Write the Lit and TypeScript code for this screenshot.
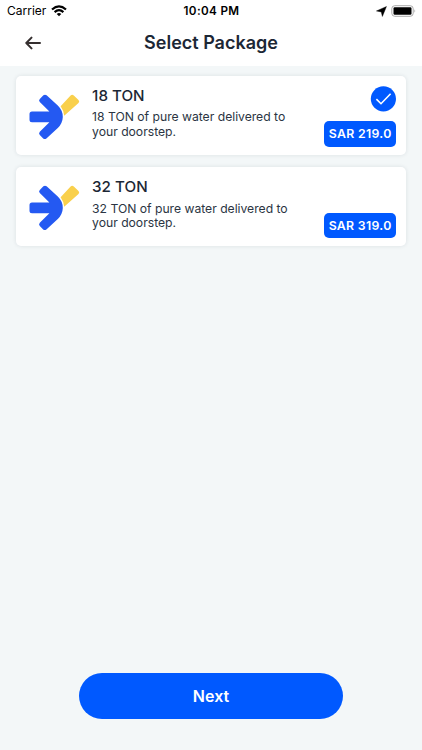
import { LitElement, html, css, svg, nothing } from "lit";
import { customElement, property, state } from "lit/decorators.js";

interface WaterPackage {
  tons: number;
  price: string;
}

const PACKAGES: WaterPackage[] = [
  { tons: 18, price: "219.0" },
  { tons: 32, price: "319.0" },
];

const logo = svg`
  <path fill="#f9d04c" d="M31.6 12.3 L41.6 1.6 Q43.2 .1 44.8 1.6 L49.5 5.9 Q51 7.4 49.5 8.9 L35.2 21.8 Q34.7 16.5 31.6 12.3Z"/>
  <path fill="#2459f2" d="M17.6 1.3 L28.8 11.6 Q33.9 16.6 33.8 23 Q33.6 29.2 28.8 34.1 L17.4 44.4 Q15.8 45.8 14.2 44.4 L10.8 41.1 Q9.3 39.4 10.8 37.8 L20.4 28.2 H3 Q.5 28.2 .5 25.7 V20.1 Q.5 17.6 3 17.6 H20.4 L10.8 8.1 Q9.3 6.5 10.8 4.9 L14.4 1.3 Q16 0 17.6 1.3Z"/>`;

@customElement("status-bar")
export class StatusBar extends LitElement {
  static styles = css`
    :host {
      display: flex;
      align-items: center;
      height: 22px;
      padding: 0 6px 0 7px;
      color: #000;
      font-size: 12px;
      line-height: 22px;
    }
    .side { flex: 1; display: flex; align-items: center; }
    .carrier { width: 39px; letter-spacing: 0; }
    .wifi { margin-left: 5px; }
    .time { font-size: 11.7px; font-weight: 600; letter-spacing: 0.35px; }
    .end { justify-content: flex-end; gap: 4.5px; }
    svg { display: block; }
  `;

  render() {
    return html`
      <div class="side">
        <span class="carrier">Carrier</span>
        <svg class="wifi" width="16" height="12" viewBox="0 0 16 12">
          <g fill="none" stroke="#000" stroke-width="2.2">
            <path d="M1 4.5 Q8 -1.7 15 4.5" />
            <path d="M3.6 7.1 Q8 3.2 12.4 7.1" />
          </g>
          <path d="M5.7 9 Q8 7 10.3 9 L8 11.3Z" />
        </svg>
      </div>
      <span class="time">10:04 PM</span>
      <div class="side end">
        <svg width="11" height="11" viewBox="0 0 10 10"><path d="M9.5 .5 L5.8 9.5 L4.8 5.4 L.4 4.5Z" stroke="#000" stroke-width=".4" /></svg>
        <svg width="25" height="12" viewBox="0 0 25 12">
          <rect x=".8" y=".7" width="21.4" height="10.6" rx="3" fill="#fff" stroke="#aaa" />
          <rect x="2.5" y="2.2" width="18" height="7.6" rx="1.2" />
          <path d="M23.5 4.2 Q25 6 23.5 7.8Z" fill="#999" />
        </svg>
      </div>
    `;
  }
}

@customElement("package-card")
export class PackageCard extends LitElement {
  @property({ attribute: false }) item!: WaterPackage;
  @property({ type: Boolean }) selected = false;

  static styles = css`
    :host {
      display: flex;
      box-sizing: border-box;
      height: 79px;
      padding: 0 10px 0 13px;
      border-radius: 5px;
      background: #fff;
      box-shadow: 0 0 4px rgba(30, 45, 60, 0.11);
      color: #1c2735;
      cursor: pointer;
    }
    .logo { flex: none; margin: 18px 12.5px 0 0; }
    .info { flex: 1; padding-top: 10px; }
    .name { font-size: 15.2px; line-height: 19px; font-weight: 450; letter-spacing: 0; }
    .text { margin-top: 5.7px; width: 200px; font-size: 12.2px; line-height: 14.3px; letter-spacing: -0.02px; color: #2b3543; white-space: nowrap; }
    .aside { display: flex; flex-direction: column; align-items: flex-end; justify-content: space-between; padding: 9.8px 0 8px; box-sizing: border-box; }
    .price {
      margin-top: auto;
      width: 72.5px;
      height: 25.5px;
      border-radius: 5px;
      background: #0059ff;
      color: #fff;
      font-size: 12.3px;
      font-weight: 600;
      line-height: 25.5px;
      letter-spacing: 0.32px;
      text-align: center;
    }
    svg { display: block; }
  `;

  render() {
    const { tons, price } = this.item;
    return html`
      <svg class="logo" width="51" height="46" viewBox="0 0 51 46">${logo}</svg>
      <div class="info">
        <div class="name">${tons} TON</div>
        <div class="text">${tons} TON of pure water delivered to<br />your doorstep.</div>
      </div>
      <div class="aside">
        ${this.selected
          ? html`<svg width="26" height="26" viewBox="0 0 26 26">
              <circle cx="13.4" cy="12.8" r="12.6" fill="#0059ff" />
              <path d="M6.4 13.1 L11 17.7 L20.6 7.8" fill="none" stroke="#fff" stroke-width="1.6" />
            </svg>`
          : nothing}
        <div class="price">SAR ${price}</div>
      </div>
    `;
  }
}

@customElement("app-root")
export class AppRoot extends LitElement {
  @state() private selected = 0;

  static styles = css`
    :host {
      display: flex;
      flex-direction: column;
      box-sizing: border-box;
      height: 100vh;
      background: #f3f7f8;
      font-family: Inter, "Liberation Sans", sans-serif;
    }
    .top { height: 66px; background: #fff; }
    .header { display: grid; grid-template-columns: 66px 1fr 66px; align-items: center; height: 42px; }
    .back { display: block; margin-left: 25px; }
    h1 { margin: 0; text-align: center; font-size: 18px; line-height: 24px; font-weight: 600; color: #1c2735; }
    .list { flex: 1; display: flex; flex-direction: column; gap: 12.3px; padding: 9.8px 15.6px 0; }
    .next {
      align-self: center;
      width: 264px;
      height: 46px;
      margin-bottom: 31px;
      padding: 0;
      border: 0;
      border-radius: 23px;
      background: #0059ff;
      color: #fff;
      font: 600 16px/46px Inter, "Liberation Sans", sans-serif;
    }
  `;

  render() {
    return html`
      <div class="top">
        <status-bar></status-bar>
        <div class="header">
          <svg class="back" width="17" height="14" viewBox="0 0 17 14" fill="none" stroke="#352f2f" stroke-width="2" stroke-linecap="round" stroke-linejoin="round">
            <path d="M15 7 H1.5 M6.5 1.6 L1.3 7 L6.5 12.4" />
          </svg>
          <h1>Select Package</h1>
        </div>
      </div>
      <div class="list">
        ${PACKAGES.map(
          (item, i) => html`<package-card .item=${item} ?selected=${i === this.selected} @click=${() => (this.selected = i)}></package-card>`
        )}
      </div>
      <button class="next">Next</button>
    `;
  }
}
